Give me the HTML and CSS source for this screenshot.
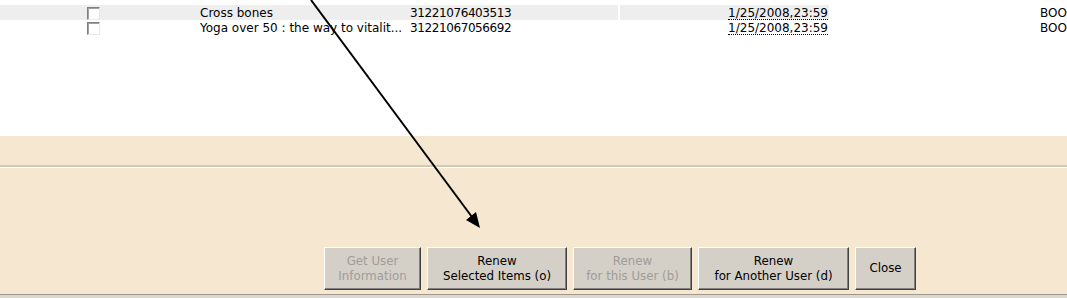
FILE: index.html
```html
<!DOCTYPE html>
<html lang="en">

<head>
    <meta charset="UTF-8">
    <meta name="viewport" content="width=device-width, initial-scale=1.0">
    <title>Renew Items</title>
    <link rel="stylesheet" href="styles.css">
</head>

<body>
    <div class="page">
        <div class="list">
            <div class="row shaded">
                <div class="cell main">
                    <span class="check"><span class="box"></span></span>
                    <span class="title">Cross bones</span>
                    <span class="barcode">31221076403513</span>
                </div>
                <div class="cell due"><span class="date">1/25/2008,23:59</span></div>
                <div class="cell kind">BOOK</div>
            </div>
            <div class="row">
                <div class="cell main">
                    <span class="check"><span class="box"></span></span>
                    <span class="title">Yoga over 50 : the way to vitalit...</span>
                    <span class="barcode">31221067056692</span>
                </div>
                <div class="cell due"><span class="date">1/25/2008,23:59</span></div>
                <div class="cell kind">BOOK</div>
            </div>
        </div>

        <div class="band"></div>

        <div class="panel">
            <div class="buttons">
                <button class="btn w1" disabled>Get User<br>Information</button>
                <button class="btn w2">Renew<br>Selected Items (o)</button>
                <button class="btn w3" disabled>Renew<br>for this User (b)</button>
                <button class="btn w4">Renew<br>for Another User (d)</button>
                <button class="btn w5">Close</button>
            </div>
        </div>
        <div class="foot"></div>

        <svg class="arrow" width="1067" height="298" viewBox="0 0 1067 298">
            <line x1="311" y1="0" x2="472" y2="217" stroke="#000" stroke-width="2" />
            <polygon points="480,228 466,220 476,212" fill="#000" />
        </svg>
    </div>
</body>

</html>
```

FILE: styles.css
```css
body {
    margin: 0;
    background-color: white;
    font-family: "DejaVu Sans", Verdana, sans-serif;
    overflow: hidden;
}

.page {
    position: relative;
    width: 1067px;
    height: 298px;
    overflow: hidden;
}

.list {
    height: 136px;
    box-sizing: border-box;
    padding-top: 5px;
    font-size: 12px;
    color: #000;
}

.row {
    display: grid;
    grid-template-columns: 618px 209px 1fr;
    column-gap: 2px;
    height: 15px;
    white-space: nowrap;
}

.row.shaded .main, .row.shaded .due {
    background-color: #eeeeee;
}

.cell {
    overflow: hidden;
    box-sizing: border-box;
    padding-top: 1px;
    line-height: 14px;
}

.main {
    display: grid;
    grid-template-columns: 200px 210px 1fr;
}

.check {
    padding-left: 87px;
    display: flex;
    align-items: center;
}

.box {
    display: inline-block;
    width: 13px;
    height: 13px;
    box-sizing: border-box;
    background-color: white;
    border: 1px solid;
    border-color: #808080 #e8e8e8 #e8e8e8 #808080;
    box-shadow: inset 1px 1px #a0a0a0;
}

.barcode {
    letter-spacing: -0.4px;
}

.due {
    text-align: right;
    padding-right: 1px;
}

.date {
    border-bottom: 1px dotted #000;
    line-height: 12px;
    display: inline-block;
}

.kind {
    padding-left: 209px;
}

.band {
    height: 29px;
    background-color: #f6e8d0;
    border-bottom: 2px solid #d0c8b8;
    margin-bottom: 1px;
}

.panel {
    height: 127px;
    box-sizing: border-box;
    background-color: #f6e8d0;
    border-bottom: 1px solid #9c9890;
    display: flex;
    align-items: flex-end;
    padding-bottom: 4px;
}

.buttons {
    display: flex;
    gap: 6px;
    padding-left: 324px;
}

.btn {
    height: 43px;
    box-sizing: border-box;
    padding: 0;
    font-family: "DejaVu Sans", Verdana, sans-serif;
    font-size: 11.8px;
    line-height: 15px;
    color: #000;
    background-color: #d4d0c8;
    border: 1px solid;
    border-color: #ffffff #404040 #404040 #ffffff;
    box-shadow: inset -1px -1px #808080;
    border-radius: 0;
}

.btn:disabled {
    color: #a09c98;
}

.w1 { width: 97px; }
.w2 { width: 140px; }
.w3 { width: 119px; }
.w4 { width: 151px; }
.w5 { width: 61px; }

.foot {
    height: 4px;
    background-color: #dcd8d0;
}

.arrow {
    position: absolute;
    top: 0;
    left: 0;
    pointer-events: none;
}
```
